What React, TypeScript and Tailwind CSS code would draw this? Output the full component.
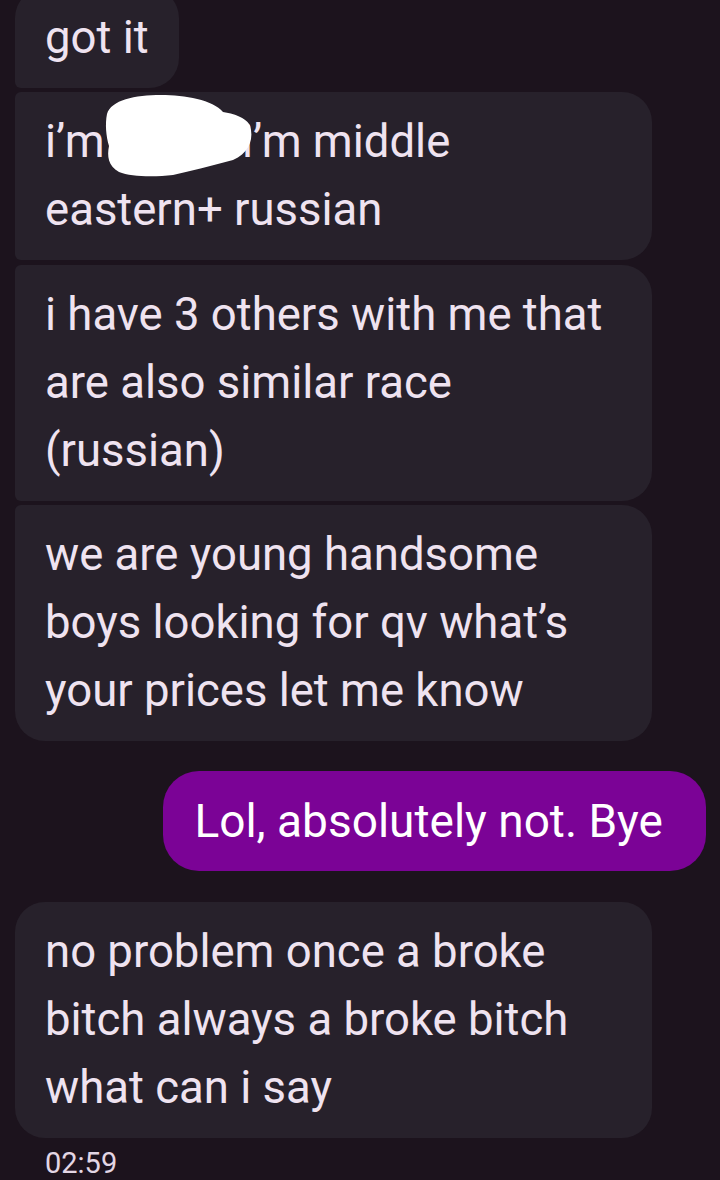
import React from 'react';

const textFont = { fontFamily: 'Roboto, "Noto Sans", sans-serif' };

// bolha recebida (cinza escuro)
function Received({ children, className = '' }: { children: React.ReactNode; className?: string }) {
  return (
    <div className={`relative bg-[#27212b] text-[#efe3f0] text-[45.5px] leading-[68px] px-[30px] py-[16px] ${className}`}>
      {children}
    </div>
  );
}

export default function App() {
  return (
    <div className="w-[720px] h-[1180px] overflow-hidden bg-[#1c131d] relative" style={textFont}>
      <div className="flex flex-col pl-[15px] -mt-[12px]">
        {/* grupo de mensagens recebidas */}
        <Received className="w-fit rounded-tl-[30px] rounded-r-[30px] rounded-bl-[6px]">got it</Received>

        <Received className="w-[637px] mt-[4px] rounded-l-[6px] rounded-r-[30px] whitespace-nowrap">
          i’m <span className="inline-block w-[126px]"></span>i’m middle
          <br />
          eastern+ russian
          {/* mancha branca de censura */}
          <svg className="absolute left-0 top-0" width="260" height="100" viewBox="0 0 260 100">
            <path
              d="M92 22 C96 8 120 3 146 3 C170 3 198 8 208 20 C222 22 236 28 236 38 C238 50 232 62 218 68 C196 74 176 79 158 83 C140 85 116 85 104 80 C93 74 92 64 94 54 C91 44 90 32 92 22 Z"
              fill="#ffffff"
            />
          </svg>
        </Received>

        <Received className="w-[637px] mt-[5px] rounded-l-[6px] rounded-r-[30px] whitespace-nowrap">
          i have 3 others with me that
          <br />
          are also similar race
          <br />
          (russian)
        </Received>

        <Received className="w-[637px] mt-[4px] rounded-tl-[6px] rounded-bl-[30px] rounded-r-[30px] whitespace-nowrap">
          we are young handsome
          <br />
          boys looking for qv what’s
          <br />
          your prices let me know
        </Received>
      </div>

      {/* mensagem enviada */}
      <div className="flex justify-end pr-[14px] mt-[30px]">
        <div className="bg-[#7b0396] text-white text-[46px] leading-[68px] pl-[31px] pr-[43px] py-[16px] rounded-[36px] whitespace-nowrap">
          Lol, absolutely not. Bye
        </div>
      </div>

      <div className="flex flex-col pl-[15px] mt-[31px]">
        <Received className="w-[637px] rounded-[30px] whitespace-nowrap">
          no problem once a broke
          <br />
          bitch always a broke bitch
          <br />
          what can i say
        </Received>
        <div className="pl-[30px] pt-[10px] text-[29px] leading-[30px] text-[#e3d6e4]">02:59</div>
      </div>
    </div>
  );
}
